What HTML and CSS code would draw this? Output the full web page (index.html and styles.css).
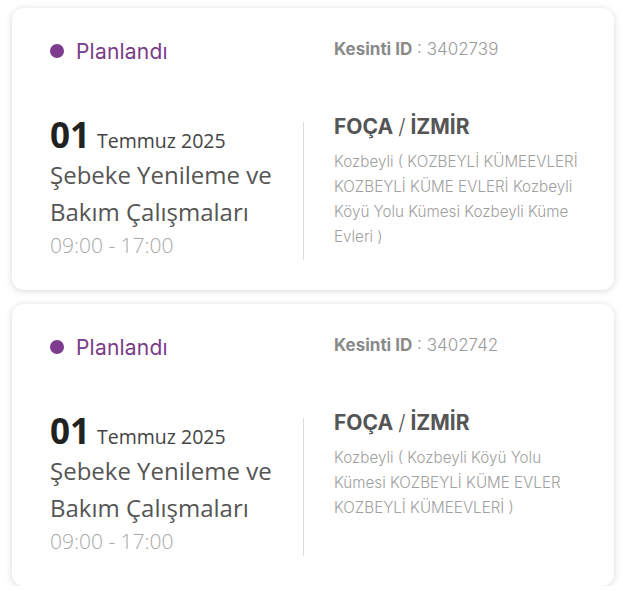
FILE: index.html
```html
<!DOCTYPE html>
<html lang="tr">
<head>
<meta charset="utf-8">
<link rel="stylesheet" href="styles.css">
</head>
<body>
<div class="list">
  <div class="card">
    <div class="head">
      <div class="status"><span class="dot"></span>Planlandı</div>
      <div class="kid"><b>Kesinti ID</b> : 3402739</div>
    </div>
    <div class="body">
      <div class="left">
        <div class="date"><span class="day">01</span><span class="month">Temmuz 2025</span></div>
        <div class="title">Şebeke Yenileme ve Bakım Çalışmaları</div>
        <div class="time">09:00 - 17:00</div>
      </div>
      <div class="divider"></div>
      <div class="right">
        <div class="place">FOÇA <span class="slash">/</span> İZMİR</div>
        <div class="addr">Kozbeyli ( KOZBEYLİ KÜMEEVLERİ KOZBEYLİ KÜME EVLERİ Kozbeyli Köyü Yolu Kümesi Kozbeyli Küme Evleri )</div>
      </div>
    </div>
  </div>
  <div class="card">
    <div class="head">
      <div class="status"><span class="dot"></span>Planlandı</div>
      <div class="kid"><b>Kesinti ID</b> : 3402742</div>
    </div>
    <div class="body">
      <div class="left">
        <div class="date"><span class="day">01</span><span class="month">Temmuz 2025</span></div>
        <div class="title">Şebeke Yenileme ve Bakım Çalışmaları</div>
        <div class="time">09:00 - 17:00</div>
      </div>
      <div class="divider"></div>
      <div class="right">
        <div class="place">FOÇA <span class="slash">/</span> İZMİR</div>
        <div class="addr">Kozbeyli ( Kozbeyli Köyü Yolu Kümesi KOZBEYLİ KÜME EVLER KOZBEYLİ KÜMEEVLERİ )</div>
      </div>
    </div>
  </div>
</div>
</body>
</html>
```
FILE: styles.css
```css
html, body {
  margin: 0;
  padding: 0;
  background: #ffffff;
}
.list {
  padding: 8px 9px 0 12px;
  display: flex;
  flex-direction: column;
  gap: 14px;
}
.card {
  background: #fff;
  border-radius: 12px;
  box-shadow: 0 1px 7px rgba(0,0,0,0.16);
  padding: 30px 26px 0 38px;
  height: 282px;
  box-sizing: border-box;
}
.head {
  display: flex;
  align-items: center;
  height: 26px;
  margin-bottom: 48px;
  font-family: "Inter", sans-serif;
}
.status {
  width: 284px;
  display: flex;
  align-items: center;
  color: #7a3b88;
  font-size: 21px;
  font-weight: 400;
  letter-spacing: 0.2px;
}
.dot {
  width: 14px;
  height: 14px;
  border-radius: 50%;
  background: #7e3c8e;
  margin-right: 12px;
}
.kid {
  color: #9a9a9a;
  font-size: 17px;
  font-weight: 300;
  margin-top: -4px;
}
.kid b {
  font-weight: 700;
  color: #8a8a8a;
}
.body {
  display: grid;
  grid-template-columns: 253px 1px 1fr;
}
.left {
  font-family: "Open Sans", sans-serif;
}
.divider {
  background: #dcdcdc;
  margin-top: 10px;
  height: 138px;
}
.date {
  display: flex;
  align-items: baseline;
  height: 41px;
  padding-top: 3px;
}
.day {
  font-size: 35px;
  line-height: 40px;
  font-weight: 700;
  color: #222;
  margin-right: 7px;
}
.month {
  font-size: 19.5px;
  line-height: 40px;
  color: #444;
}
.title {
  color: #555;
  font-size: 24px;
  line-height: 37px;
}
.time {
  color: #a8a8a8;
  font-size: 21px;
  font-weight: 300;
  line-height: 30px;
}
.right {
  padding-left: 30px;
  font-family: "Inter", sans-serif;
}
.place {
  color: #555;
  font-size: 21px;
  font-weight: 700;
  line-height: 30px;
}
.slash {
  font-weight: 300;
}
.addr {
  color: #a0a0a0;
  font-size: 15.2px;
  font-weight: 300;
  line-height: 25px;
  margin-top: 7px;
}
```
